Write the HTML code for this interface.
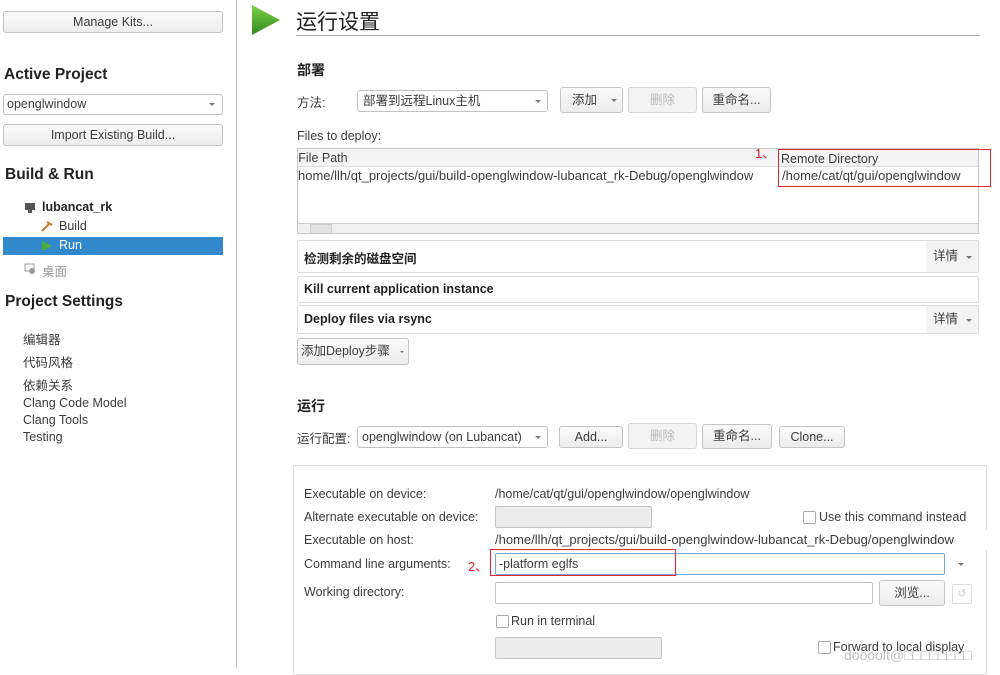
<!DOCTYPE html>
<html><head><meta charset="utf-8"><style>
*{box-sizing:border-box;margin:0;padding:0}
body{width:1000px;height:668px;background:#fff;position:relative;overflow:hidden;font-family:"Liberation Sans","Noto Sans CJK SC",sans-serif;font-size:12.5px;color:#3c3c3c}
.a{position:absolute;white-space:nowrap}
.btn{position:absolute;border:1px solid #c4c4c4;border-radius:3px;background:linear-gradient(#fafafa,#ececec);text-align:center;color:#3c3c3c}
.dis{color:#bbb;background:#f3f3f3;border-color:#d6d6d6}
.inp{position:absolute;border:1px solid #c2c2c2;border-radius:2px;background:#fff}
.ro{background:#ececec}
.b{font-weight:bold;color:#222}
.arr{position:absolute;width:0;height:0;border-left:3px solid transparent;border-right:3px solid transparent;border-top:3px solid #777}
.cb{position:absolute;width:13px;height:13px;border:1px solid #aaa;border-radius:2px;background:#fff}
.red{position:absolute;border:1.5px solid #e0252e}
.p{font-size:13px}
</style></head><body>
<!-- left panel -->
<div class="btn" style="left:3px;top:11px;width:220px;height:22px;line-height:20px">Manage Kits...</div>
<div class="a b" style="left:4px;top:66px;font-size:15.5px">Active Project</div>
<div class="inp" style="left:3px;top:94px;width:220px;height:21px;line-height:19px;padding-left:3px;border-radius:3px">openglwindow</div>
<div class="arr" style="left:209px;top:103px"></div>
<div class="btn" style="left:3px;top:124px;width:220px;height:22px;line-height:20px">Import Existing Build...</div>
<div class="a b" style="left:5px;top:166px;font-size:15.5px">Build &amp; Run</div>
<svg class="a" style="left:24px;top:202px" width="12" height="12"><rect x="1" y="1" width="10" height="7" fill="#555"/><rect x="4" y="8" width="4" height="3" fill="#555"/></svg>
<div class="a b" style="left:42px;top:200px">lubancat_rk</div>
<svg class="a" style="left:41px;top:220px" width="12" height="12"><line x1="1" y1="11" x2="9" y2="3" stroke="#d0782a" stroke-width="2"/><line x1="6" y1="2" x2="11" y2="5" stroke="#d0782a" stroke-width="2"/></svg>
<div class="a" style="left:59px;top:219px">Build</div>
<div class="a" style="left:3px;top:237px;width:220px;height:18px;background:#3189cb"></div>
<svg class="a" style="left:41px;top:240px" width="12" height="12"><polygon points="1,1 11,6 1,11" fill="#4cae3a"/></svg>
<div class="a" style="left:59px;top:238px;color:#fff">Run</div>
<svg class="a" style="left:24px;top:263px" width="12" height="12"><rect x="1" y="1" width="9" height="7" fill="none" stroke="#999"/><circle cx="8" cy="8" r="3" fill="#999"/></svg>
<div class="a" style="left:42px;top:261px;color:#999">桌面</div>
<div class="a b" style="left:5px;top:293px;font-size:15.5px">Project Settings</div>
<div class="a" style="left:23px;top:329px">编辑器</div>
<div class="a" style="left:23px;top:352px">代码风格</div>
<div class="a" style="left:23px;top:375px">依赖关系</div>
<div class="a" style="left:23px;top:396px">Clang Code Model</div>
<div class="a" style="left:23px;top:413px">Clang Tools</div>
<div class="a" style="left:23px;top:430px">Testing</div>
<div class="a" style="left:236px;top:0;width:1px;height:668px;background:#bdbdbd"></div>
<!-- header -->
<svg class="a" style="left:250px;top:4px" width="32" height="34"><defs><linearGradient id="g" x1="0" y1="0" x2="0" y2="1"><stop offset="0" stop-color="#7fd14a"/><stop offset="1" stop-color="#2f8a1c"/></linearGradient></defs><polygon points="2,1 30,16 2,31" fill="url(#g)"/></svg>
<div class="a" style="left:296px;top:6px;font-size:21px;color:#222">运行设置</div>
<div class="a" style="left:296px;top:35px;width:684px;height:1px;background:#aaa"></div>
<div class="a b" style="left:297px;top:60px;font-size:14px">部署</div>
<div class="a" style="left:297px;top:92px">方法:</div>
<div class="inp" style="left:357px;top:90px;width:191px;height:22px;line-height:20px;padding-left:5px;border-radius:3px">部署到远程Linux主机</div>
<div class="arr" style="left:535px;top:100px"></div>
<div class="btn" style="left:560px;top:87px;width:63px;height:26px;line-height:24px;padding-right:14px">添加</div>
<div class="arr" style="left:611px;top:99px"></div>
<div class="btn dis" style="left:628px;top:87px;width:69px;height:26px;line-height:24px">删除</div>
<div class="btn" style="left:702px;top:87px;width:69px;height:26px;line-height:24px">重命名...</div>
<div class="a" style="left:297px;top:129px">Files to deploy:</div>
<div class="a" style="left:297px;top:148px;width:682px;height:86px;border:1px solid #c8c8c8;background:#fff;overflow:hidden">
 <div class="a" style="left:0;top:0;width:680px;height:18px;background:#f4f4f4;border-bottom:1px solid #ddd"></div>
 <div class="a" style="left:-6px;top:2px">l File Path</div>
 <div class="a" style="left:480px;top:0;width:1px;height:18px;background:#ddd"></div>
 <div class="a" style="left:483px;top:3px">Remote Directory</div>
 <div class="a p" style="left:0;top:19px">home/llh/qt_projects/gui/build-openglwindow-lubancat_rk-Debug/openglwindow</div>
 <div class="a p" style="left:484px;top:19px">/home/cat/qt/gui/openglwindow</div>
 <div class="a" style="left:0;top:74px;width:680px;height:11px;background:#f0f0f0;border-top:1px solid #ccc"></div>
 <div class="a" style="left:12px;top:75px;width:22px;height:10px;background:#e2e2e2;border:1px solid #ccc"></div>
</div>
<div class="red" style="left:778px;top:149px;width:213px;height:38px"></div>
<div class="a" style="left:755px;top:143px;color:#e0252e;font-size:13px">1、</div>
<div class="a" style="left:297px;top:240px;width:682px;height:33px;border:1px solid #ddd;border-radius:2px"></div>
<div class="a b" style="left:304px;top:248px">检测剩余的磁盘空间</div>
<div class="a" style="left:926px;top:241px;width:52px;height:31px;background:#f3f3f3;line-height:31px;padding-left:7px">详情</div>
<div class="arr" style="left:966px;top:256px"></div>
<div class="a" style="left:297px;top:276px;width:682px;height:27px;border:1px solid #ddd;border-radius:2px"></div>
<div class="a b" style="left:304px;top:282px">Kill current application instance</div>
<div class="a" style="left:297px;top:305px;width:682px;height:29px;border:1px solid #ddd;border-radius:2px"></div>
<div class="a b" style="left:304px;top:312px">Deploy files via rsync</div>
<div class="a" style="left:926px;top:306px;width:52px;height:27px;background:#f3f3f3;line-height:27px;padding-left:7px">详情</div>
<div class="arr" style="left:966px;top:319px"></div>
<div class="btn" style="left:297px;top:338px;width:112px;height:27px;line-height:25px;text-align:left;padding-left:3px">添加Deploy步骤</div>
<div class="arr" style="left:400px;top:351px;border-width:2px 2px 0"></div>
<!-- run -->
<div class="a b" style="left:297px;top:396px;font-size:14px">运行</div>
<div class="a" style="left:297px;top:428px">运行配置:</div>
<div class="inp" style="left:357px;top:426px;width:191px;height:22px;line-height:20px;padding-left:4px;border-radius:3px;overflow:hidden">openglwindow (on Lubancat)</div>
<div class="a" style="left:528px;top:428px;width:18px;height:18px;background:#fff"></div>
<div class="arr" style="left:535px;top:436px"></div>
<div class="btn" style="left:559px;top:426px;width:64px;height:22px;line-height:20px">Add...</div>
<div class="btn dis" style="left:628px;top:423px;width:69px;height:26px;line-height:24px">删除</div>
<div class="btn" style="left:702px;top:424px;width:70px;height:25px;line-height:23px">重命名...</div>
<div class="btn" style="left:779px;top:426px;width:66px;height:22px;line-height:20px">Clone...</div>
<div class="a" style="left:293px;top:465px;width:694px;height:210px;border:1px solid #ddd;border-radius:2px"></div>
<div class="a" style="left:304px;top:487px">Executable on device:</div>
<div class="a" style="left:495px;top:487px">/home/cat/qt/gui/openglwindow/openglwindow</div>
<div class="a" style="left:304px;top:510px">Alternate executable on device:</div>
<div class="inp ro" style="left:495px;top:506px;width:157px;height:22px"></div>
<div class="cb" style="left:803px;top:511px"></div>
<div class="a" style="left:819px;top:510px">Use this command instead</div>
<div class="a" style="left:304px;top:533px">Executable on host:</div>
<div class="a p" style="left:495px;top:532px">/home/llh/qt_projects/gui/build-openglwindow-lubancat_rk-Debug/openglwindow</div>
<div class="a" style="left:980px;top:530px;width:20px;height:20px;background:#fff"></div>
<div class="a" style="left:304px;top:557px">Command line arguments:</div>
<div class="inp" style="left:495px;top:553px;width:450px;height:22px;border-color:#7aa7d6;line-height:20px;padding-left:3px">-platform eglfs</div>
<div class="red" style="left:490px;top:549px;width:186px;height:27px"></div>
<div class="a" style="left:468px;top:556px;color:#e0252e;font-size:13px">2、</div>
<div class="arr" style="left:958px;top:563px"></div>
<div class="a" style="left:304px;top:585px">Working directory:</div>
<div class="inp" style="left:495px;top:582px;width:378px;height:22px"></div>
<div class="btn" style="left:879px;top:580px;width:66px;height:26px;line-height:24px">浏览...</div>
<div class="a" style="left:952px;top:584px;width:20px;height:20px;border:1px solid #ddd;border-radius:2px;color:#ccc;font-size:11px;text-align:center;line-height:18px">↺</div>
<div class="cb" style="left:496px;top:615px"></div>
<div class="a" style="left:511px;top:614px">Run in terminal</div>
<div class="inp ro" style="left:495px;top:637px;width:167px;height:22px"></div>
<div class="cb" style="left:818px;top:641px"></div>
<div class="a" style="left:833px;top:640px">Forward to local display</div>
<div class="a" style="left:844px;top:647px;color:rgba(150,150,150,0.6);font-size:14px">doooolt@□□□□□□□□</div>
</body></html>
